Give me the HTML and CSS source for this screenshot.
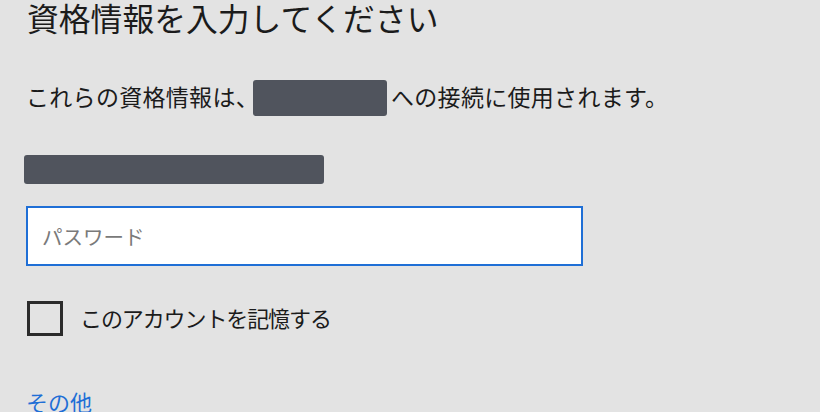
FILE: index.html
```html
<!DOCTYPE html>
<html lang="ja">
  <head>
    <meta charset="UTF-8">
    <meta name="viewport" content="width=device-width, initial-scale=1.0">
    <title>資格情報を入力してください</title>
    <link rel="stylesheet" href="styles.css">
  </head>
  <body>
    <div class="credential-dialog">
      <h1 class="dialog-title">資格情報を入力してください</h1>

      <div class="notice">
        <span class="notice-text">これらの資格情報は、</span>
        <span class="redacted redacted-host"></span>
        <span class="notice-text">への接続に使用されます。</span>
      </div>

      <div class="redacted redacted-user"></div>

      <div class="password-field">
        <input type="password" class="password-input" placeholder="パスワード">
      </div>

      <label class="remember">
        <span class="checkbox"></span>
        <span class="remember-text">このアカウントを記憶する</span>
      </label>

      <a class="more-link" href="#">その他</a>
    </div>
  </body>
</html>
```

FILE: styles.css
```css
:root {
  --bg-dialog: #e3e3e3;
  --text-main: #1b1b1b;
  --text-placeholder: #7a7a7a;
  --accent: #1f6fd6;
  --redact: #50545d;
}

body {
  margin: 0;
  background: var(--bg-dialog);
  font-family: "Noto Sans CJK JP", "Noto Sans", sans-serif;
  color: var(--text-main);
  overflow: hidden;
}

.credential-dialog {
  display: flex;
  flex-direction: column;
  align-items: flex-start;
  padding: 0 0 0 26px;
}

.dialog-title {
  margin: 0 0 0 1px;
  font-size: 31.8px;
  line-height: 34px;
  font-weight: normal;
}

.notice {
  display: flex;
  align-items: center;
  margin-top: 46px;
  font-size: 23px;
  line-height: 28px;
}

.notice-text {
  letter-spacing: 0.3px;
  padding-bottom: 5px;
}

.redacted {
  background: var(--redact);
  border-radius: 3px;
}

.redacted-host {
  width: 134px;
  height: 36px;
  margin: 0 4px 0 -6px;
}

.redacted-user {
  width: 300px;
  height: 29px;
  margin: 39px 0 0 -2px;
}

.password-field {
  margin-top: 22px;
}

.password-input {
  box-sizing: border-box;
  width: 557px;
  height: 60px;
  padding: 0 14px;
  border: 2px solid var(--accent);
  background: #fff;
  font-family: inherit;
  font-size: 20.5px;
  color: var(--text-main);
  outline: none;
}

.password-input::placeholder {
  color: var(--text-placeholder);
}

.remember {
  display: flex;
  align-items: center;
  margin: 35px 0 0 1px;
}

.checkbox {
  box-sizing: border-box;
  width: 36px;
  height: 35px;
  border: 3px solid #2b2b2b;
}

.remember-text {
  margin-left: 17px;
  font-size: 22px;
  letter-spacing: -1.1px;
  padding-bottom: 3px;
}

.more-link {
  margin-top: 52px;
  font-size: 22px;
  line-height: 26px;
  color: var(--accent);
  text-decoration: none;
}
```
